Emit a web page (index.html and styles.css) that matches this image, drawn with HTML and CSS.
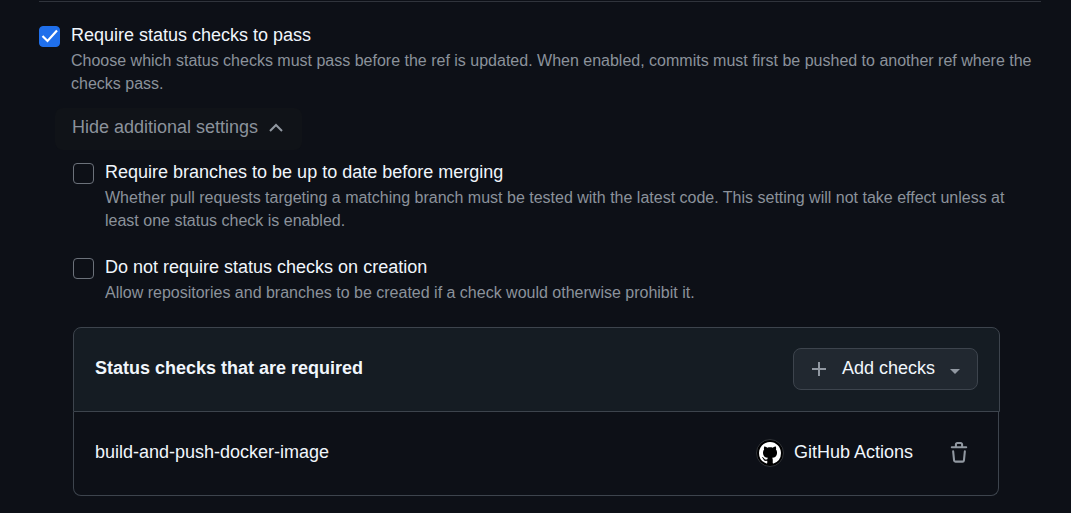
FILE: index.html
```html
<!DOCTYPE html>
<html lang="en">
<head>
<meta charset="utf-8">
<title>Branch rules</title>
<link rel="stylesheet" href="styles.css">
</head>
<body>
<main class="rules">
  <div class="rule">
    <input class="check" type="checkbox" id="status" checked>
    <div class="rule-text">
      <label class="title" for="status">Require status checks to pass</label>
      <p class="note">Choose which status checks must pass before the ref is updated. When enabled, commits must first be pushed to another ref where the checks pass.</p>
    </div>
  </div>
  <button class="toggle" type="button" aria-expanded="true">Hide additional settings
    <svg class="chevron" viewBox="0 0 14 9" aria-hidden="true"><path d="M1 8 7 2l6 6"/></svg>
  </button>
  <section class="settings">
    <div class="rule">
      <input class="check" type="checkbox" id="current">
      <div class="rule-text">
        <label class="title" for="current">Require branches to be up to date before merging</label>
        <p class="note">Whether pull requests targeting a matching branch must be tested with the latest code. This setting will not take effect unless at least one status check is enabled.</p>
      </div>
    </div>
    <div class="rule">
      <input class="check" type="checkbox" id="creation">
      <div class="rule-text">
        <label class="title" for="creation">Do not require status checks on creation</label>
        <p class="note">Allow repositories and branches to be created if a check would otherwise prohibit it.</p>
      </div>
    </div>
    <div class="panel">
      <header class="panel-head">
        <h2 class="panel-title">Status checks that are required</h2>
        <button class="add" type="button">
          <svg class="plus" viewBox="0 0 16 16" aria-hidden="true"><path d="M8 1v14M1 8h14"/></svg>
          <span>Add checks</span>
          <svg class="caret" viewBox="0 0 10 5" aria-hidden="true"><path d="M0 0h10L5 5z"/></svg>
        </button>
      </header>
      <div class="panel-row">
        <span class="check-name">build-and-push-docker-image</span>
        <span class="source">
          <span class="avatar"><svg viewBox="0 0 16 16" aria-hidden="true"><path d="M8 0c4.42 0 8 3.58 8 8a8.013 8.013 0 0 1-5.45 7.59c-.4.08-.55-.17-.55-.38 0-.27.01-1.13.01-2.2 0-.75-.25-1.23-.54-1.48 1.78-.2 3.65-.88 3.65-3.95 0-.88-.31-1.59-.82-2.15.08-.2.36-1.02-.08-2.12 0 0-.67-.22-2.2.82-.64-.18-1.32-.27-2-.27-.68 0-1.36.09-2 .27-1.53-1.03-2.2-.82-2.2-.82-.44 1.1-.16 1.92-.08 2.12-.51.56-.82 1.28-.82 2.15 0 3.06 1.86 3.75 3.64 3.95-.23.2-.44.55-.51 1.07-.46.21-1.61.55-2.33-.66-.15-.24-.6-.83-1.23-.82-.67.01-.27.38.01.53.34.19.73.9.82 1.13.16.45.68 1.31 2.69.94 0 .67.01 1.3.01 1.49 0 .21-.15.45-.55.38A7.995 7.995 0 0 1 0 8c0-4.42 3.58-8 8-8Z"/></svg></span>
          <span class="source-name">GitHub Actions</span>
        </span>
        <button class="remove" type="button" aria-label="Remove check">
          <svg viewBox="0 0 16 16" aria-hidden="true"><path d="M11 1.75V3h2.25a.75.75 0 0 1 0 1.5H2.75a.75.75 0 0 1 0-1.5H5V1.75C5 .784 5.784 0 6.75 0h2.5C10.216 0 11 .784 11 1.75ZM4.496 6.675l.66 6.6a.25.25 0 0 0 .249.225h5.19a.25.25 0 0 0 .249-.225l.66-6.6a.75.75 0 0 1 1.492.149l-.66 6.6A1.748 1.748 0 0 1 10.595 15h-5.19a1.75 1.75 0 0 1-1.741-1.575l-.66-6.6a.75.75 0 1 1 1.492-.15ZM6.5 1.75V3h3V1.75a.25.25 0 0 0-.25-.25h-2.5a.25.25 0 0 0-.25.25Z"/></svg>
        </button>
      </div>
    </div>
  </section>
</main>
</body>
</html>
```
FILE: styles.css
```css
* { box-sizing: border-box; }
body {
  margin: 0;
  background: #0d1017;
  color: #f0f6fc;
  font: 18px/24px "Liberation Sans", Arial, sans-serif;
}
button { font: inherit; cursor: pointer; }
.rules {
  margin: 1px 30px 0 39px;
  padding-top: 21px;
  border-top: 1px solid #30343c;
}
.rule { display: flex; gap: 11px; }
.rule-text { flex: 1; }
.title { display: block; }
.note {
  margin: 2px 0 0;
  color: #8b929b;
  font-size: 16px;
  line-height: 23px;
}
.check {
  appearance: none;
  flex: none;
  width: 21px;
  height: 21px;
  margin: 3px 0 0;
  border: 1px solid #6b717a;
  border-radius: 4px;
}
.check:checked {
  border-color: #1f6feb;
  background: #1f6feb url("data:image/svg+xml,%3Csvg xmlns='http://www.w3.org/2000/svg' viewBox='0 0 19 19'%3E%3Cpath d='M2.5 9l5 5L17 3.5' fill='none' stroke='white' stroke-width='2.2'/%3E%3C/svg%3E") center / 19px no-repeat;
}
.toggle {
  display: flex;
  align-items: center;
  gap: 11px;
  height: 42px;
  margin: 13px 0 0 16px;
  padding: 0 19px 4px 17px;
  border: 0;
  border-radius: 8px;
  background: #101318;
  color: #8b929b;
}
.chevron {
  width: 14px;
  height: 9px;
  fill: none;
  stroke: #9198a1;
  stroke-width: 2;
}
.settings {
  display: flex;
  flex-direction: column;
  gap: 23px;
  margin: 10px 0 0 34px;
}
.panel { margin-right: 41px; }
.panel-head {
  display: flex;
  align-items: center;
  justify-content: space-between;
  padding: 20px 21px 21px;
  border: 1px solid #3d444d;
  border-radius: 8px 8px 0 0;
  background: #151c23;
}
.panel-title { margin: 0 0 2px; font-size: 18px; }
.add {
  display: flex;
  align-items: center;
  height: 42px;
  padding: 0 17px;
  border: 1px solid #3d444d;
  border-radius: 8px;
  background: #212830;
  color: #f0f6fc;
}
.add span { margin: 0 15px 3px; }
.plus {
  width: 16px;
  height: 16px;
  fill: none;
  stroke: #9198a1;
  stroke-width: 2;
}
.caret { width: 10px; height: 5px; margin-top: 4px; fill: #9198a1; }
.panel-row {
  display: flex;
  align-items: center;
  margin-right: 1px;
  padding: 20px 28px 22px 21px;
  border: 1px solid #3d444d;
  border-top: 0;
  border-radius: 0 0 8px 8px;
}
.check-name, .source-name { padding-bottom: 2px; }
.check-name { flex: 1; }
.source { display: flex; align-items: center; gap: 10px; }
.avatar {
  display: grid;
  place-items: center;
  width: 28px;
  height: 28px;
  border: 1px solid #303338;
  border-radius: 50%;
  background: #000;
}
.avatar svg { width: 22px; height: 22px; fill: #fff; }
.remove {
  display: grid;
  place-items: center;
  height: 41px;
  margin-left: 35px;
  padding: 0;
  border: 0;
  background: none;
}
.remove svg { width: 22px; height: 22px; fill: #9198a1; }
```
